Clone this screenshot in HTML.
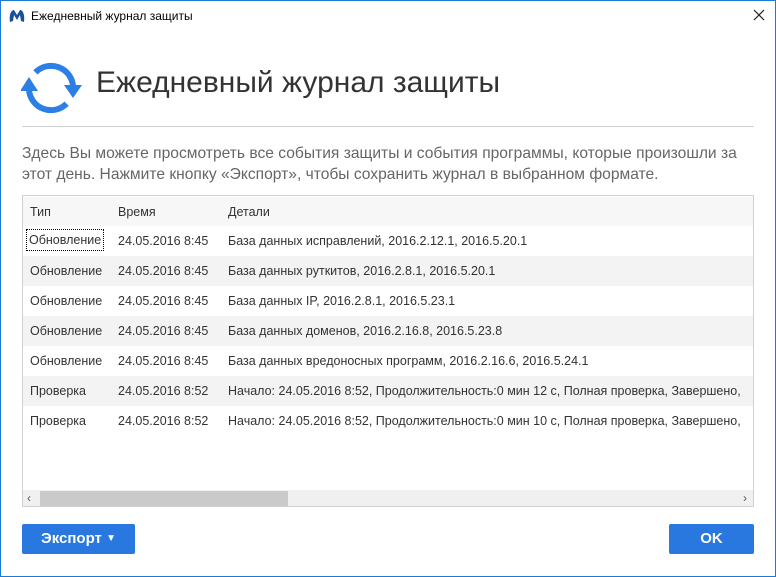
<!DOCTYPE html><html><head><meta charset="utf-8"><style>
body{margin:0;width:776px;height:577px;overflow:hidden;font-family:"Liberation Sans","DejaVu Sans",sans-serif;background:#fff;position:relative}
.win{position:absolute;left:0;top:0;width:774px;height:575px;border:1px solid #1a7bd6}
.t{position:absolute}
.tb{position:absolute;left:22px;top:195px;width:730px;height:310px;border:1px solid #d0d0d0;overflow:hidden}
.row{position:absolute;left:0;width:730px;height:30px;font-size:12.5px;color:#333;line-height:30px;white-space:nowrap}
.row span{position:absolute}
.c1{left:7px}.c2{left:95px}.c3{left:205px}
.g{background:#f3f3f3}
.btn{position:absolute;background:#2878e0;color:#fff;font-weight:bold;font-size:15px;border-radius:2px;text-align:center;line-height:30px;height:30px}
</style></head><body><div class="win"></div>
<svg class="t" style="left:9px;top:9px" width="16" height="14" viewBox="0 0 16 14"><path d="M1 13 C0 6 2 1 5 1 L8 6 L11 1 C14 1 16 6 15 13 L12 12 L11 6 L8 11 L5 6 L4 12 Z" fill="#1a4fa0"/></svg>
<div class="t" style="left:31px;top:9px;font-size:12px;color:#000">Ежедневный журнал защиты</div>
<svg class="t" style="left:753px;top:9px" width="12" height="12" viewBox="0 0 12 12"><path d="M1 1L11 11M11 1L1 11" stroke="#222" stroke-width="1.2"/></svg>
<svg class="t" style="left:21px;top:60px" width="62" height="56" viewBox="0 0 62 56"><g fill="none" stroke="#2a80e4" stroke-width="6"><path d="M14.4 12.4 A22 22 0 0 1 52 26"/><path d="M45.6 43.6 A22 22 0 0 1 8 30"/></g><path d="M43 25 L61 25 L52 38Z" fill="#2a80e4"/><path d="M-1 31 L17 31 L8 17Z" fill="#2a80e4"/></svg>
<div class="t" style="left:96px;top:66px;font-size:30px;color:#333">Ежедневный журнал защиты</div>
<div class="t" style="left:22px;top:126px;width:732px;height:1px;background:#d0d0d0"></div>
<div class="t" style="left:22px;top:143px;width:760px;font-size:15.6px;line-height:21px;color:#666">Здесь Вы можете просмотреть все события защиты и события программы, которые произошли за<br>этот день. Нажмите кнопку «Экспорт», чтобы сохранить журнал в выбранном формате.</div>
<div class="tb">
<div class="row" style="top:1px;height:29px;background:#f7f7f7"><span class="c1">Тип</span><span class="c2">Время</span><span class="c3">Детали</span></div>
<div class="row" style="top:30px"><span class="c1" style="left:4px;top:4px;height:20px;line-height:20px;padding:0 2px;outline:1px dotted #000">Обновление</span><span class="c2">24.05.2016 8:45</span><span class="c3">База данных исправлений, 2016.2.12.1, 2016.5.20.1</span></div>
<div class="row g" style="top:60px"><span class="c1">Обновление</span><span class="c2">24.05.2016 8:45</span><span class="c3">База данных руткитов, 2016.2.8.1, 2016.5.20.1</span></div>
<div class="row" style="top:90px"><span class="c1">Обновление</span><span class="c2">24.05.2016 8:45</span><span class="c3">База данных IP, 2016.2.8.1, 2016.5.23.1</span></div>
<div class="row g" style="top:120px"><span class="c1">Обновление</span><span class="c2">24.05.2016 8:45</span><span class="c3">База данных доменов, 2016.2.16.8, 2016.5.23.8</span></div>
<div class="row" style="top:150px"><span class="c1">Обновление</span><span class="c2">24.05.2016 8:45</span><span class="c3">База данных вредоносных программ, 2016.2.16.6, 2016.5.24.1</span></div>
<div class="row g" style="top:180px"><span class="c1">Проверка</span><span class="c2">24.05.2016 8:52</span><span class="c3">Начало: 24.05.2016 8:52, Продолжительность:0 мин 12 с, Полная проверка, Завершено,</span></div>
<div class="row" style="top:210px"><span class="c1">Проверка</span><span class="c2">24.05.2016 8:52</span><span class="c3">Начало: 24.05.2016 8:52, Продолжительность:0 мин 10 с, Полная проверка, Завершено,</span></div>
<div style="position:absolute;left:0;top:294px;width:730px;height:16px;background:#f0f0f0"></div>
<div style="position:absolute;left:17px;top:295px;width:248px;height:15px;background:#cacaca"></div>
<div style="position:absolute;left:4px;top:294px;font-size:12px;color:#555;line-height:16px">‹</div>
<div style="position:absolute;left:720px;top:294px;font-size:12px;color:#555;line-height:16px">›</div>
</div>
<div class="btn" style="left:22px;top:524px;width:113px">Экспорт <span style="font-size:10px;vertical-align:2px">▼</span></div>
<div class="btn" style="left:669px;top:524px;width:85px">OK</div>
</body></html>
